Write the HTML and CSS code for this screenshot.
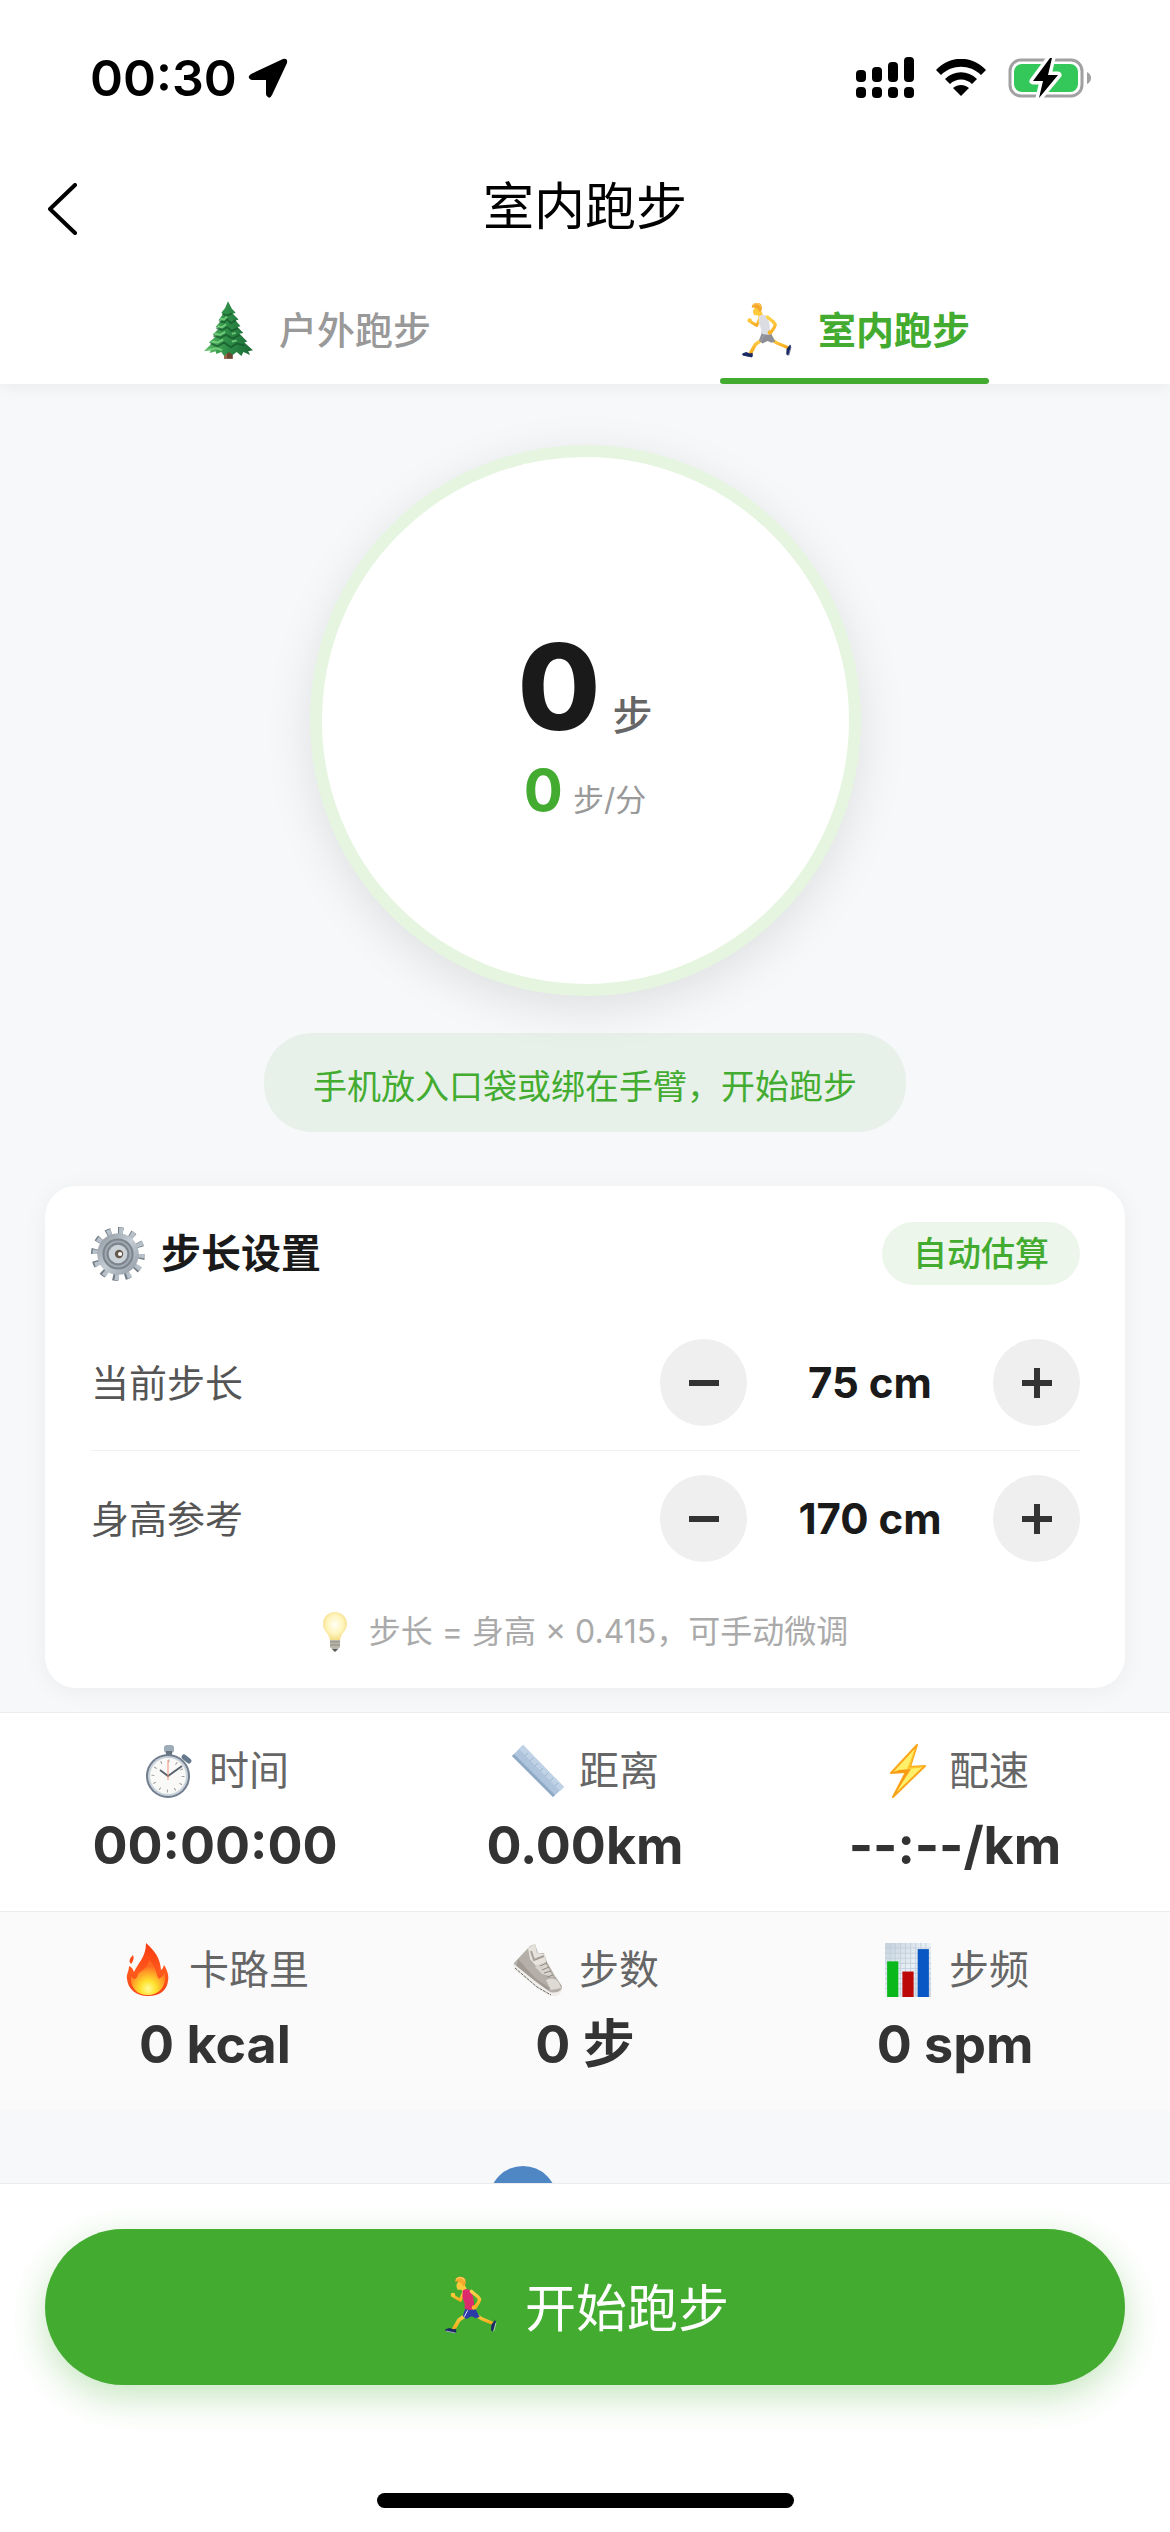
FILE: index.html
```html
<!DOCTYPE html>
<html lang="zh-CN">
<head>
<meta charset="utf-8">
<meta name="viewport" content="width=device-width, initial-scale=1">
<title>室内跑步</title>
<link rel="stylesheet" href="styles.css">
</head>
<body>
<svg class="defs" aria-hidden="true">
  <defs>
    <linearGradient id="skin" x1="0" y1="0" x2="0" y2="1"><stop offset="0" stop-color="#ffd34d"/><stop offset="1" stop-color="#f7ab1c"/></linearGradient>
    <linearGradient id="leaf" x1="0" y1="0" x2="1" y2="0"><stop offset="0" stop-color="#5cbf6a"/><stop offset=".45" stop-color="#2f8f48"/><stop offset="1" stop-color="#1b6a35"/></linearGradient>
    <linearGradient id="metal" x1="0" y1="0" x2="1" y2="1"><stop offset="0" stop-color="#8b949c"/><stop offset=".5" stop-color="#c3cbd3"/><stop offset="1" stop-color="#8d969f"/></linearGradient>
    <radialGradient id="glow" cx=".5" cy=".45" r=".6"><stop offset="0" stop-color="#fffef6"/><stop offset=".55" stop-color="#fff5bd"/><stop offset="1" stop-color="#f0d77a"/></radialGradient>
    <linearGradient id="flame" x1="0" y1="0" x2="0" y2="1"><stop offset="0" stop-color="#fb3a12"/><stop offset=".55" stop-color="#ff5a1c"/><stop offset="1" stop-color="#f9421a"/></linearGradient>
    <radialGradient id="flame-core" cx=".5" cy=".82" r=".65"><stop offset="0" stop-color="#fffb9a"/><stop offset=".35" stop-color="#ffe22e"/><stop offset=".75" stop-color="#ff9a26"/><stop offset="1" stop-color="#ff6a20"/></radialGradient>
    <linearGradient id="paper" x1="0" y1="0" x2="1" y2="1"><stop offset="0" stop-color="#c3d1dc"/><stop offset=".5" stop-color="#eaf1f6"/><stop offset="1" stop-color="#cad3de"/></linearGradient>
    <symbol id="runner" viewBox="78 80 156 174">
      <g fill="none" stroke="url(#skin)" stroke-linecap="round" stroke-linejoin="round">
        <path d="M134 128L124 153L106 142" stroke-width="9"/>
        <path d="M145 194L120 212L105 238" stroke-width="11"/>
        <path d="M165 194L188 208L219 221" stroke-width="10"/>
      </g>
      <circle cx="102" cy="137" r="7" fill="#ffc738"/>
      <path d="M114 102L112 111L116 121L127 121L131 127L143 119L136 103L125 92Z" fill="#ffc93c"/>
      <path d="M109 98C107 87 118 81 128 83C140 84 143 96 138 108L132 111L127 101C120 100 117 94 109 98Z" fill="#f5a72b"/>
      <path d="M113 89C120 82 133 84 136 93" fill="none" stroke="#ffc65b" stroke-width="4" stroke-linecap="round"/>
      <path d="M131 124C137 118 148 119 156 124L163 145L167 178C158 186 145 184 136 176C141 163 133 156 130 143Z" fill="var(--shirt)"/>
      <path d="M157 126C164 134 178 140 182 150C180 162 172 169 166 177" fill="none" stroke="url(#skin)" stroke-width="10" stroke-linecap="round" stroke-linejoin="round"/>
      <circle cx="165" cy="175" r="7" fill="#f8b52b"/>
      <path d="M139 178C150 184 163 182 170 180L182 203L170 207L158 201L142 209L131 200Z" fill="var(--shorts)"/>
      <path d="M146 183L136 202" stroke="var(--stripe)" stroke-width="3"/>
      <path d="M79 240L91 236L103 240L111 238L112 249L107 252L84 247C80 246 78 244 79 240Z" fill="#1b2b62"/>
      <path d="M217 226L216 243L222 247L231 217L228 212Z" fill="#1b2b62"/>
      <path d="M81 245L109 251M224 246L231 220" stroke="var(--sole)" stroke-width="2"/>
    </symbol>
  </defs>
</svg>
<div class="screen">
  <header class="top">
    <div class="status">
      <span class="status-time">00:30</span>
      <svg class="locate" viewBox="0 0 40 40" aria-hidden="true"><path d="M3 16L35 1Q40 0 39 5L24 37Q22 41 20 39Q18 38 18 36V22H4Q0 21 1 18Z"/></svg>
      <svg class="signal" viewBox="0 0 58 42" aria-hidden="true"><rect y="13" width="10" height="12" rx="4"/><rect x="16" y="10" width="10" height="15" rx="4"/><rect x="32" y="5" width="10" height="20" rx="4"/><rect x="48" width="10" height="25" rx="4"/><rect y="30" width="10" height="11" rx="4"/><rect x="16" y="30" width="10" height="11" rx="4"/><rect x="32" y="30" width="10" height="11" rx="4"/><rect x="48" y="30" width="10" height="11" rx="4"/></svg>
      <svg class="wifi" viewBox="0 0 50 38" aria-hidden="true"><path d="M0 11C14-4 36-4 50 11L45 16C34 5 16 5 5 16ZM9 20C18 11 32 11 41 20L36 25C30 19 20 19 14 25ZM17 29C22 25 28 25 33 29L25 37Z"/></svg>
      <svg class="battery" viewBox="0 0 83 42" aria-hidden="true"><rect x="2" y="3" width="72" height="36" rx="11" fill="none" stroke="#a1a1a4" stroke-width="3"/><path d="M79 15Q83 17 83 21Q83 25 79 27Z" fill="#a1a1a4"/><rect x="6" y="7" width="64" height="28" rx="8" fill="#34c759"/><path d="M42 1L25 24H35L31 41L50 18H40L44 1Z" fill="#000" stroke="#fff" stroke-width="7" stroke-linejoin="round" paint-order="stroke"/></svg>
    </div>
    <div class="nav">
      <button class="back" type="button" aria-label="返回"><svg viewBox="0 0 30 52" aria-hidden="true"><path d="M27 2L2 26L27 50"/></svg></button>
      <h1>室内跑步</h1>
    </div>
    <nav class="tabs">
      <a class="tab" href="#outdoor">
        <svg class="tab-icon" viewBox="0 0 52 60" aria-hidden="true">
          <path d="M22 48H31V60H22Z" fill="#6d4630"/><path d="M22 48H25V60H22Z" fill="#9a6a48"/>
          <path d="M26 0L30 8L34 12L31 13L37 19L34 20L39 26L36 27L42 33L38 34L46 42L43 43L52 51L47 52L49 56L42 53L40 57L35 53L31 56L27 53L22 57L19 53L14 55L13 52L7 54L8 51L1 52L9 44L6 43L14 36L10 35L17 28L13 27L19 20L16 20L21 13L19 12L23 7Z" fill="url(#leaf)"/>
          <path d="M17 21L22 22L25 19L29 23L34 20M14 28L20 30L25 27L30 31L36 28M11 36L18 38L24 35L31 39L38 35M8 44L15 47L22 43L29 48L35 44L43 46M20 13L25 15L30 13" fill="none" stroke="#14562b" stroke-width="2" opacity=".7"/>
          <path d="M18 18L22 19L25 16M15 26L20 27L24 24M12 34L18 35L23 32M9 42L15 43L21 40M30 42L35 41M30 34L34 33M5 51L14 49L20 51" fill="none" stroke="#86dc87" stroke-width="2" opacity=".75"/>
        </svg>
        <span>户外跑步</span>
      </a>
      <a class="tab active" href="#indoor" aria-current="page">
        <svg class="tab-icon runner-plain" aria-hidden="true"><use href="#runner"/></svg>
        <span>室内跑步</span>
      </a>
    </nav>
  </header>

  <main class="content">
    <section class="dial">
      <p class="dial-steps"><strong>0</strong><span>步</span></p>
      <p class="dial-rate"><strong>0</strong><span>步/分</span></p>
    </section>
    <p class="tip">手机放入口袋或绑在手臂，开始跑步</p>

    <section class="card">
      <div class="card-head">
        <svg class="gear" viewBox="0 0 52 52" aria-hidden="true">
          <circle cx="26" cy="26" r="22" fill="none" stroke="#737d86" stroke-width="8" stroke-dasharray="5 6.52" pathLength="138.24"/>
          <circle cx="27" cy="26" r="22" fill="none" stroke="#b7c0c8" stroke-width="7" stroke-dasharray="4 7.52" pathLength="138.24"/>
          <circle cx="26" cy="26" r="20" fill="url(#metal)"/>
          <circle cx="26" cy="26" r="15" fill="#7c858e"/>
          <circle cx="26" cy="26" r="12" fill="none" stroke="#a0a8b0" stroke-width="2"/>
          <circle cx="26" cy="26" r="9" fill="#cbd2d8"/>
          <circle cx="27" cy="26" r="4" fill="#66594c"/><circle cx="28" cy="26" r="2" fill="#fff"/>
        </svg>
        <h2>步长设置</h2>
        <button class="badge" type="button">自动估算</button>
      </div>
      <div class="setting">
        <span class="setting-name">当前步长</span>
        <div class="stepper">
          <button type="button" aria-label="减少步长"><svg viewBox="0 0 30 30" aria-hidden="true"><path d="M0 15H30"/></svg></button>
          <output>75 cm</output>
          <button type="button" aria-label="增加步长"><svg viewBox="0 0 30 30" aria-hidden="true"><path d="M0 15H30M15 0V30"/></svg></button>
        </div>
      </div>
      <div class="setting">
        <span class="setting-name">身高参考</span>
        <div class="stepper">
          <button type="button" aria-label="减少身高"><svg viewBox="0 0 30 30" aria-hidden="true"><path d="M0 15H30"/></svg></button>
          <output>170 cm</output>
          <button type="button" aria-label="增加身高"><svg viewBox="0 0 30 30" aria-hidden="true"><path d="M0 15H30M15 0V30"/></svg></button>
        </div>
      </div>
      <p class="hint">
        <svg viewBox="0 0 24 40" aria-hidden="true"><path d="M7 27H17V35L14 38Q12 41 10 38L7 35Z" fill="#b9b6ac"/><path d="M7 30H17M7 33H17" stroke="#8c8981" stroke-width="1"/><path d="M9 37H15L12 40Z" fill="#5b5b5b"/><path d="M12 0C19 0 24 5 24 12C24 19 18 21 17 28H7C6 21 0 19 0 12C0 5 5 0 12 0Z" fill="url(#glow)"/></svg>
        <span>步长 = 身高 × 0.415，可手动微调</span>
      </p>
    </section>

    <section class="stats">
      <dl class="stat-row">
        <div class="stat">
          <dt>
            <svg viewBox="0 0 44 54" aria-hidden="true"><rect x="18" y="1" width="10" height="8" rx="3" fill="#9eacb8"/><rect x="20" y="7" width="6" height="6" fill="#66727f"/><path d="M38 13L43 17" stroke="#66788c" stroke-width="5" stroke-linecap="round"/><circle cx="22" cy="32" r="22" fill="#6f7d8c"/><circle cx="22" cy="32" r="20" fill="#c9d2da"/><circle cx="22" cy="32" r="18" fill="#f9f9f7"/><circle cx="22" cy="32" r="15" fill="none" stroke="#9a9a9a" stroke-width="3" stroke-dasharray="1 6.85"/><path d="M14 26L22 32L36 22" fill="none" stroke="#5a6570" stroke-width="2"/><path d="M22 16V36" stroke="#ee8f78" stroke-width="1"/></svg>
            <span>时间</span>
          </dt>
          <dd>00:00:00</dd>
        </div>
        <div class="stat">
          <dt>
            <svg viewBox="0 0 52 54" aria-hidden="true"><path d="M11 1L52 43L41 53L0 12Z" fill="#aec4dc"/><path d="M11 1L52 43L48 47L7 5Z" fill="#c0d3e6"/><path d="M0 12L41 53L43 51L2 10Z" fill="#8fa9c4"/><path d="M16 9L13 12M21 14L18 17M26 19L23 22M31 24L28 27M36 29L33 32M41 34L38 37M46 39L43 42" stroke="#9ab3ce" stroke-width="1"/></svg>
            <span>距离</span>
          </dt>
          <dd>0.00km</dd>
        </div>
        <div class="stat">
          <dt>
            <svg viewBox="0 0 36 54" aria-hidden="true"><path d="M27 1L1 29L16 28L3 53L35 22L20 23Z" fill="#fff06a" stroke="#fba61c" stroke-width="2" stroke-linejoin="round"/><path d="M1 29L16 28L3 53L21 25L9 26Z" fill="#f99a12"/><path d="M35 22L20 23L27 1L17 25L28 24Z" fill="#ffc429"/></svg>
            <span>配速</span>
          </dt>
          <dd>--:--/km</dd>
        </div>
      </dl>
      <dl class="stat-row alt">
        <div class="stat">
          <dt>
            <svg viewBox="0 0 42 54" aria-hidden="true"><path d="M19 0C28 8 33 15 34 27C36 26 36 24 37 22C41 28 42 34 41 38C40 47 33 53 21 53C9 53 1 46 0 36C-1 31 2 29 2 23C6 25 6 27 7 29C11 20 19 14 19 0ZM6 12Q8 16 4 21Q0 18 6 12Z" fill="url(#flame)"/><path d="M22 17C30 24 29 33 32 36C35 34 37 31 38 29C40 42 33 52 21 52C10 52 3 45 4 33C7 38 10 36 11 31C15 27 21 25 22 17Z" fill="url(#flame-core)"/></svg>
            <span>卡路里</span>
          </dt>
          <dd>0 kcal</dd>
        </div>
        <div class="stat">
          <dt>
            <svg viewBox="0 0 50 54" aria-hidden="true"><path d="M1 20L17 3L22 1L25 10L31 10L34 19L42 33L49 43Q49 52 40 52Q34 51 25 43L3 27Q0 24 1 20Z" fill="#b4afa8"/><path d="M15 5L22 1L24 10L32 11L33 19L23 23L17 16Z" fill="#e6e3dd"/><path d="M18 8L21 17L31 13" fill="none" stroke="#a7a099" stroke-width="2"/><path d="M32 19L40 34L29 31L22 24Z" fill="#d8d4ce"/><path d="M34 20L27 23M36 24L29 27M38 28L31 30M40 32L34 34" stroke="#8f8981" stroke-width="1"/><path d="M5 16L22 35L37 45L32 49L3 26Z" fill="#a09a93"/><path d="M33 37Q41 33 46 40L48 45L38 47Z" fill="#dedad4"/><path d="M1 21L22 38L37 49Q44 51 49 46Q48 54 39 53Q33 52 24 45L3 28Q0 26 1 21Z" fill="#f0eeea"/><path d="M2 25L24 44L38 52" fill="none" stroke="#6d6a66" stroke-width="1" stroke-dasharray="3 1"/></svg>
            <span>步数</span>
          </dt>
          <dd>0 步</dd>
        </div>
        <div class="stat">
          <dt>
            <svg viewBox="0 0 45 53" aria-hidden="true"><rect width="45" height="53" fill="url(#paper)"/><path d="M5 0V52M10 0V52M15 0V52M20 0V52M25 0V52M30 0V52M35 0V52M40 0V52M0 5H45M0 10H45M0 15H45M0 20H45M0 25H45M0 30H45M0 35H45M0 40H45M0 45H45" stroke="#bccad8" stroke-width="1" opacity=".7"/><rect x="2" y="18" width="11" height="35" fill="#0bb81c"/><rect x="17" y="28" width="11" height="25" fill="#bd0808"/><rect x="32" y="6" width="11" height="47" fill="#0857c4"/></svg>
            <span>步频</span>
          </dt>
          <dd>0 spm</dd>
        </div>
      </dl>
    </section>
    <div class="peek"><span class="peek-dot"></span></div>
  </main>

  <footer class="bottom">
    <button class="start" type="button">
      <svg class="runner-sport" aria-hidden="true"><use href="#runner"/></svg>
      <span>开始跑步</span>
    </button>
    <div class="home-bar"></div>
  </footer>
</div>
</body>
</html>
```
FILE: styles.css
```css
* {
  box-sizing: border-box;
  margin: 0;
  padding: 0;
}

body {
  background: #f6f8fa;
  color: #333;
  font-family: Inter, "Noto Sans CJK SC", sans-serif;
}

button {
  border: 0;
  font: inherit;
  cursor: pointer;
}

svg {
  display: block;
  flex: none;
}

.defs {
  position: absolute;
  width: 0;
  height: 0;
}

.screen {
  display: flex;
  flex-direction: column;
  height: 100vh;
}

/* Header */
.top {
  position: relative;
  flex: none;
  background: #fff;
  box-shadow: 0 3px 16px rgba(0, 0, 0, 0.06);
}

.status {
  display: flex;
  align-items: center;
  padding: 46px 79px 31px 90px;
  color: #000;
}

.status-time {
  font-size: 50px;
  font-weight: 600;
  line-height: 64px;
}

.locate {
  width: 40px;
  height: 40px;
  margin-left: 11px;
}

.signal {
  width: 58px;
  height: 42px;
  margin-left: auto;
}

.wifi {
  width: 50px;
  height: 38px;
  margin-left: 22px;
}

.battery {
  width: 83px;
  height: 42px;
  margin-left: 22px;
}

.nav {
  position: relative;
  display: flex;
  align-items: center;
  justify-content: center;
  height: 132px;
}

.back {
  position: absolute;
  top: 0;
  left: 0;
  height: 100%;
  padding: 4px 48px 0;
  background: none;
}

.back svg {
  width: 30px;
  height: 52px;
  fill: none;
  stroke: #000;
  stroke-width: 4;
  stroke-linecap: round;
  stroke-linejoin: round;
}

.nav h1 {
  color: #000;
  font-size: 51px;
  font-weight: 400;
  line-height: 72px;
}

.tabs {
  display: flex;
  padding: 0 46px;
}

.tab {
  position: relative;
  display: flex;
  flex: 1;
  align-items: center;
  justify-content: center;
  gap: 26px;
  height: 111px;
  padding: 2px 0 0 3px;
  color: #999;
  font-size: 38px;
  font-weight: 500;
  line-height: 54px;
  text-decoration: none;
}

.tab-icon {
  width: 50px;
  height: 60px;
}

.active {
  color: #43ac30;
  font-weight: 700;
}

.active::after {
  content: "";
  position: absolute;
  bottom: 0;
  left: 25%;
  width: 50%;
  height: 6px;
  border-radius: 3px;
  background: #43ac30;
}

.runner-plain {
  --shirt: #dcdce3;
  --shorts: #8e8e96;
  --stripe: #a4a4ac;
  --sole: #1b2b62;
}

/* Scrolling content */
.content {
  display: flex;
  flex: 1;
  flex-direction: column;
  min-height: 0;
  overflow: hidden;
}

.dial {
  display: flex;
  flex: none;
  flex-direction: column;
  align-items: center;
  align-self: center;
  justify-content: center;
  width: 551px;
  height: 551px;
  margin-top: 61px;
  padding-top: 26px;
  border: 12px solid #e6f5e0;
  border-radius: 50%;
  background: #fff;
  box-shadow: 0 12px 48px rgba(0, 0, 0, 0.1);
}

.dial p {
  display: flex;
  align-items: baseline;
}

.dial-steps {
  gap: 12px;
  color: #666;
  font-size: 40px;
  font-weight: 500;
  line-height: 94px;
}

.dial-steps strong {
  color: #1a1a1a;
  font-size: 120px;
  font-weight: 800;
}

.dial-rate {
  gap: 10px;
  color: #999;
  font-size: 31px;
  line-height: 54px;
}

.dial-rate strong {
  color: #43ac30;
  font-size: 58px;
  font-weight: 700;
}

.tip {
  flex: none;
  align-self: center;
  margin-top: 37px;
  padding: 28px 49px 19px;
  border-radius: 48px;
  background: rgba(67, 172, 48, 0.08);
  color: #43ac30;
  font-size: 34px;
  line-height: 52px;
}

/* Stride settings */
.card {
  flex: none;
  margin: 54px 45px 24px;
  padding: 36px 45px 33px 46px;
  border-radius: 31px;
  background: #fff;
  box-shadow: 0 3px 24px rgba(0, 0, 0, 0.05);
}

.card-head {
  display: flex;
  align-items: center;
  margin-bottom: 30px;
}

.gear {
  width: 54px;
  height: 54px;
}

.card-head h2 {
  margin-left: 16px;
  color: #1a1a1a;
  font-size: 40px;
  font-weight: 700;
  line-height: 56px;
}

.badge {
  margin-left: auto;
  padding: 0 31px;
  border-radius: 32px;
  background: #ecf6ea;
  color: #43ac30;
  font-size: 34px;
  font-weight: 500;
  line-height: 63px;
}

.setting {
  display: flex;
  align-items: center;
  justify-content: space-between;
  padding: 24px 0;
}

.setting + .setting {
  border-top: 1px solid #f2f2f2;
}

.setting-name {
  color: #555;
  font-size: 38px;
  line-height: 52px;
}

.stepper {
  display: flex;
  align-items: center;
}

.stepper button {
  display: grid;
  place-items: center;
  width: 87px;
  height: 87px;
  border-radius: 50%;
  background: #efefef;
}

.stepper svg {
  width: 30px;
  height: 30px;
  stroke: #333;
  stroke-width: 6;
}

.stepper output {
  width: 246px;
  color: #1a1a1a;
  font-size: 42px;
  font-weight: 700;
  text-align: center;
}

.hint {
  display: flex;
  align-items: center;
  justify-content: center;
  gap: 22px;
  margin-top: 23px;
  color: #aaa;
  font-size: 32px;
  line-height: 46px;
}

.hint svg {
  width: 24px;
  height: 40px;
}

/* Run statistics */
.stat-row {
  display: flex;
  padding: 28px 30px 29px;
  border-top: 1px solid #ececec;
  background: #fff;
}

.alt {
  background: #fafafa;
}

.stat {
  flex: 1;
  text-align: center;
}

.stat dt {
  display: flex;
  align-items: center;
  justify-content: center;
  gap: 14px;
  color: #666;
  font-size: 40px;
  line-height: 60px;
}

.stat dd {
  margin-top: 9px;
  font-size: 52px;
  font-weight: 700;
  line-height: 72px;
}

.stat svg {
  width: 54px;
  height: 54px;
}

.peek {
  flex: none;
  align-self: center;
  width: 192px;
  margin-top: 56px;
}

.peek-dot {
  display: block;
  width: 68px;
  height: 68px;
  border-radius: 50%;
  background: #4f86c4;
}

/* Bottom action */
.bottom {
  flex: none;
  padding: 45px 45px 24px;
  border-top: 1px solid #ececec;
  background: #fff;
}

.start {
  display: flex;
  align-items: center;
  justify-content: center;
  gap: 28px;
  width: 100%;
  height: 156px;
  padding: 0 0 4px 4px;
  border-radius: 78px;
  background: #43ac30;
  box-shadow: 0 12px 36px rgba(67, 172, 48, 0.3);
  color: #fff;
  font-size: 51px;
}

.runner-sport {
  width: 52px;
  height: 58px;
  --shirt: #dc2b6c;
  --shorts: #2c3aa8;
  --stripe: #e8ecff;
  --sole: #e6e9f5;
}

.home-bar {
  width: 417px;
  height: 15px;
  margin: 108px auto 0;
  border-radius: 8px;
  background: #000;
}
```
